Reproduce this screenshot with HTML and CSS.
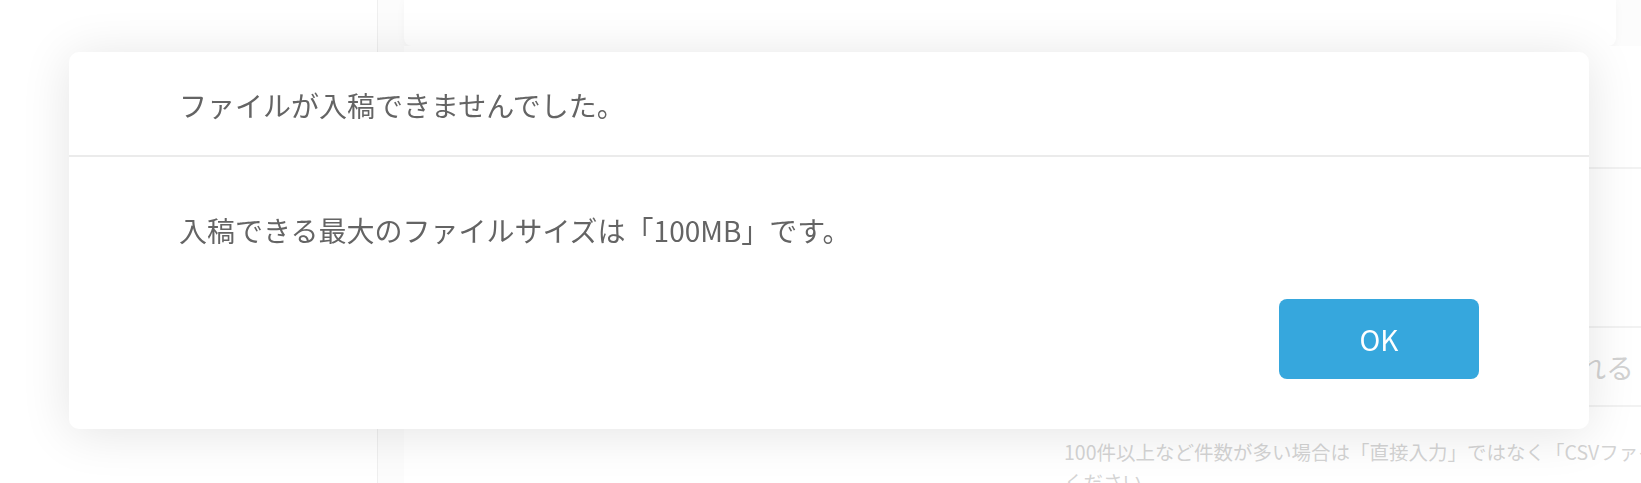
FILE: index.html
```html
<!DOCTYPE html>
<html lang="ja">
<head>
<meta charset="utf-8">
<title>入稿エラー</title>
<link rel="stylesheet" href="styles.css">
</head>
<body>
<div class="page">
  <aside class="sidebar"></aside>
  <main class="main">
    <div class="topbar"></div>
    <div class="form">
      <div class="label-col"></div>
      <div class="field-col">
        <div class="row-top"></div>
        <div class="input-box"><span class="input-text">入稿したファイル名がそのまま使用される</span></div>
        <p class="note">100件以上など件数が多い場合は「直接入力」ではなく「CSVファイル」でご入稿ください。<br>ください。</p>
      </div>
    </div>
  </main>
</div>
<div class="overlay"></div>
<div class="modal" role="dialog">
  <div class="modal-header">ファイルが入稿できませんでした。</div>
  <div class="modal-body">
    <p class="modal-message">入稿できる最大のファイルサイズは「100MB」です。</p>
    <div class="modal-actions">
      <button class="btn-ok" type="button">OK</button>
    </div>
  </div>
</div>
</body>
</html>
```

FILE: styles.css
```css
* { box-sizing: border-box; }
html, body {
  margin: 0;
  padding: 0;
  width: 1641px;
  height: 483px;
  overflow: hidden;
  background: #ffffff;
  font-family: "Noto Sans CJK JP", "Noto Sans", sans-serif;
}
.page {
  display: flex;
  height: 483px;
}
.sidebar {
  width: 378px;
  flex: 0 0 378px;
  border-right: 1px solid #d6d6d6;
  background: #fff;
}
.main {
  flex: 1;
  padding-left: 26px;
  background: #f7f7f7;
}
.topbar {
  height: 46px;
  width: 1212px;
  background: #fff;
  border-radius: 0 0 8px 8px;
  box-shadow: 0 2px 8px rgba(0,0,0,0.08);
}
.form {
  display: grid;
  grid-template-columns: 660px 1fr;
  background: #fff;
}
.field-col {
  overflow: hidden;
}
.row-top {
  height: 123px;
  border-bottom: 2px solid #dcdcdc;
}
.input-box {
  margin-top: 157px;
  height: 81px;
  border-top: 2px solid #dcdcdc;
  border-bottom: 2px solid #dcdcdc;
  padding-left: 38px;
  display: flex;
  align-items: center;
  white-space: nowrap;
  overflow: hidden;
}
.input-text {
  font-size: 28px;
  color: #8a8a8a;
}
.note {
  margin: 30px 0 0 0;
  font-size: 19.5px;
  line-height: 30px;
  color: #8e8e8e;
  white-space: nowrap;
}
.overlay {
  position: fixed;
  inset: 0;
  background: rgba(255,255,255,0.62);
}
.modal {
  position: absolute;
  left: 69px;
  top: 52px;
  width: 1520px;
  background: #fff;
  border-radius: 10px;
  box-shadow: 0 4px 50px rgba(0,0,0,0.11);
  color: #646464;
}
.modal-header {
  padding: 33px 110px 30px;
  font-size: 28px;
  line-height: 40px;
  border-bottom: 2px solid #ebebeb;
}
.modal-body {
  padding: 53px 110px 50px 110px;
}
.modal-message {
  margin: 0;
  font-size: 28px;
  line-height: 40px;
}
.modal-actions {
  display: flex;
  justify-content: flex-end;
  margin-top: 49px;
}
.btn-ok {
  width: 200px;
  height: 80px;
  border: none;
  border-radius: 8px;
  background: #36a7dd;
  color: #fff;
  font-family: "Noto Sans CJK JP", "Noto Sans", sans-serif;
  font-size: 28px;
  padding: 0;
  cursor: pointer;
}
```
